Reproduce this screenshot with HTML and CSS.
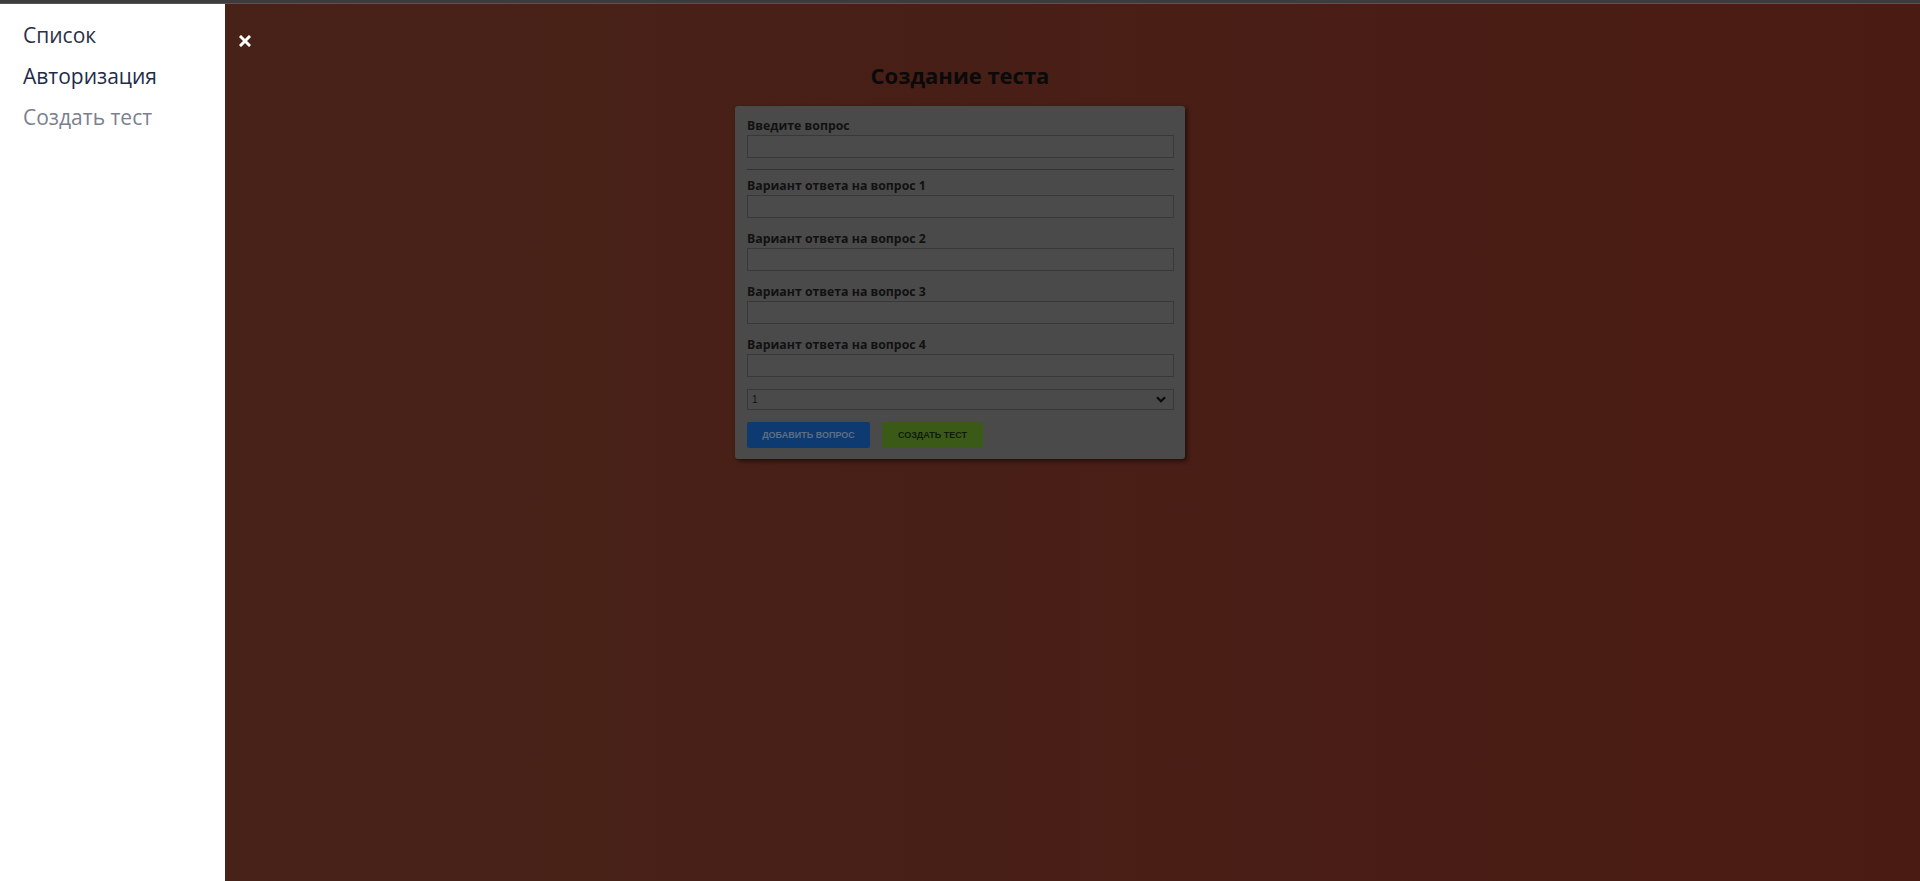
FILE: index.html
```html
<!DOCTYPE html>
<html lang="ru">
<head>
<meta charset="utf-8">
<title>Создание теста</title>
<link rel="stylesheet" href="styles.css">
</head>
<body>
<div class="topbar"></div>
<div class="page">
  <main class="content">
    <h1 class="title">Создание теста</h1>
    <form class="card">
      <div class="group">
        <label class="label">Введите вопрос</label>
        <input class="field" type="text">
      </div>
      <hr class="divider">
      <div class="group">
        <label class="label">Вариант ответа на вопрос 1</label>
        <input class="field" type="text">
      </div>
      <div class="group">
        <label class="label">Вариант ответа на вопрос 2</label>
        <input class="field" type="text">
      </div>
      <div class="group">
        <label class="label">Вариант ответа на вопрос 3</label>
        <input class="field" type="text">
      </div>
      <div class="group">
        <label class="label">Вариант ответа на вопрос 4</label>
        <input class="field" type="text">
      </div>
      <div class="select-wrap">
        <select class="select"><option>1</option><option>2</option><option>3</option><option>4</option></select>
        <svg class="chevron" width="10" height="7" viewBox="0 0 10 7"><path d="M1 1.2 L5 5.2 L9 1.2" fill="none" stroke="#0a0a0a" stroke-width="2.2"/></svg>
      </div>
      <div class="actions">
        <button type="button" class="btn btn-blue">Добавить вопрос</button>
        <button type="button" class="btn btn-green">Создать тест</button>
      </div>
    </form>
  </main>
  <nav class="drawer">
    <a class="nav-link" href="#">Список</a>
    <a class="nav-link" href="#">Авторизация</a>
    <a class="nav-link muted" href="#">Создать тест</a>
  </nav>
  <button class="close" type="button" aria-label="Закрыть">
    <svg width="12" height="12" viewBox="0 0 12 12"><path d="M2 2 L10 10 M10 2 L2 10" stroke="#fff" stroke-width="3" stroke-linecap="square"/></svg>
  </button>
</div>
</body>
</html>
```

FILE: styles.css
```css
html, body {
  margin: 0;
  padding: 0;
  height: 100%;
  overflow: hidden;
}
body {
  font-family: "Open Sans", "Noto Sans", sans-serif;
  background: #ffffff;
}
.topbar {
  height: 3px;
  background: #3c3c3c;
  border-bottom: 1px solid #555;
}
.page {
  position: relative;
  height: 877px;
  background: linear-gradient(to right, #472318 0%, #481f16 50%, #4a1b13 100%);
}
.content {
  display: flex;
  flex-direction: column;
  align-items: center;
  padding-top: 57px;
}
.title {
  margin: 0 0 17px;
  font-size: 22px;
  line-height: 28px;
  font-weight: 700;
  color: #0a0a0a;
}
.card {
  width: 450px;
  box-sizing: border-box;
  padding: 12px 11px 11px 12px;
  background: #4a4a4a;
  border-radius: 3px;
  box-shadow: 2px 2px 4px rgba(0, 0, 0, 0.55);
}
.group {
  display: flex;
  flex-direction: column;
  margin-bottom: 13px;
}
.label {
  font-size: 12.3px;
  font-weight: 700;
  line-height: 16px;
  margin-bottom: 1px;
  color: #111;
}
.field {
  height: 23px;
  box-sizing: border-box;
  margin: 0;
  border: 1px solid #383838;
  background: #4b4b4b;
  outline: none;
}
.divider {
  margin: -2px 0 8px;
  border: 0;
  border-top: 1px solid #333;
  height: 0;
}
.select-wrap {
  position: relative;
  margin-top: -1px;
  margin-bottom: 12px;
}
.select {
  display: block;
  width: 100%;
  height: 21px;
  margin: 0;
  padding: 0 4px;
  border: 1px solid #383838;
  background: #4a4a4a;
  color: #111;
  font-family: "Liberation Sans", Arial, sans-serif;
  font-size: 10px;
  appearance: none;
  -webkit-appearance: none;
  outline: none;
}
.chevron {
  position: absolute;
  right: 8px;
  top: 7px;
  pointer-events: none;
}
.actions {
  display: flex;
  gap: 12px;
}
.btn {
  height: 26px;
  border: 0;
  border-radius: 2px;
  font-family: "Liberation Sans", Arial, sans-serif;
  font-size: 9px;
  font-weight: 700;
  text-transform: uppercase;
  padding: 0;
  cursor: pointer;
}
.btn-blue {
  width: 123px;
  background: #0d3a70;
  color: #5d6f87;
}
.btn-green {
  width: 101px;
  background: #3b5a17;
  color: #0f1a08;
}
.drawer {
  position: absolute;
  left: 0;
  top: 0;
  bottom: 0;
  width: 225px;
  background: #ffffff;
  display: flex;
  flex-direction: column;
  padding: 11px 0 0 23px;
  box-sizing: border-box;
}
.nav-link {
  font-size: 21px;
  line-height: 41px;
  color: #2a3046;
  text-decoration: none;
}
.nav-link + .nav-link {
  color: #1e2b4a;
}
.nav-link.muted {
  color: #7b8090;
}
.close {
  position: absolute;
  left: 239px;
  top: 31px;
  width: 12px;
  height: 12px;
  padding: 0;
  border: 0;
  background: none;
  display: flex;
}
```
